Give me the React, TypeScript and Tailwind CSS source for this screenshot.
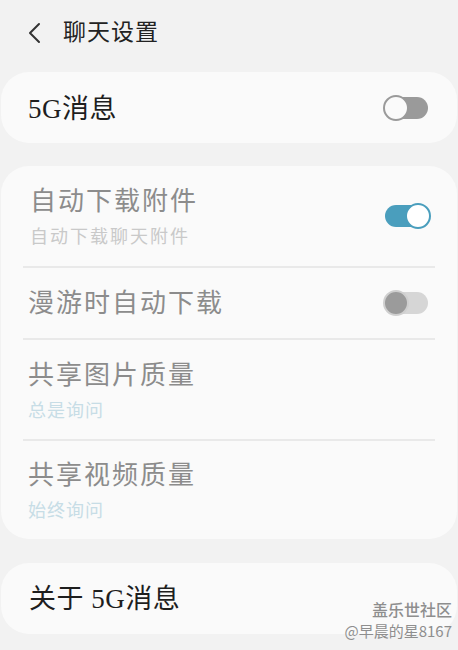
import React from "react";

const cjk = { fontFamily: '"Liberation Serif", "Noto Sans CJK SC", serif' };

function Toggle({ state }: { state: "off" | "on" | "disabled" }) {
  if (state === "on") {
    return (
      <div className="relative w-[46px] h-[26px]">
        <div className="absolute left-0 top-[2px] w-[44px] h-[22px] rounded-full bg-[#4a9ebd]" />
        <div className="absolute right-0 top-0 w-[26px] h-[26px] rounded-full bg-white border-[2px] border-[#4a9ebd]" />
      </div>
    );
  }
  if (state === "off") {
    return (
      <div className="relative w-[45px] h-[26px]">
        <div className="absolute right-0 top-[2px] w-[44px] h-[22px] rounded-full bg-[#9a9a9a]" />
        <div className="absolute left-0 top-0 w-[26px] h-[26px] rounded-full bg-[#fafafa] border-[2px] border-[#9a9a9a]" />
      </div>
    );
  }
  return (
    <div className="relative w-[45px] h-[26px]">
      <div className="absolute right-0 top-[2px] w-[44px] h-[22px] rounded-full bg-[#d6d6d6]" />
      <div className="absolute left-0 top-0 w-[26px] h-[26px] rounded-full bg-[#9b9b9b] border-[2px] border-[#cfcfcf]" />
    </div>
  );
}

function Divider() {
  return <div className="mx-[22px] h-[2px] bg-[#e9e9e9]" />;
}

export default function App() {
  return (
    <div className="relative w-[458px] h-[650px] bg-[#f2f2f2] overflow-hidden" style={cjk}>
      {/* Header */}
      <div className="flex items-center h-[72px] pl-[27px]">
        <svg width="16" height="22" viewBox="0 0 16 22" className="mr-[20px] mt-[-6px]">
          <path d="M12 2 L3 11 L12 20" fill="none" stroke="#333" strokeWidth="2" strokeLinecap="round" strokeLinejoin="round" />
        </svg>
        <span className="text-[23px] text-[#222] tracking-[1px] mt-[-5px]">聊天设置</span>
      </div>

      {/* Card 1 */}
      <div className="mx-[1px] h-[71px] rounded-[28px] bg-[#fafafa] flex items-center justify-between pl-[27px] pr-[29px]">
        <span className="text-[27px] text-[#1e1e1e] tracking-[0.5px] mt-[3px]">5G消息</span>
        <Toggle state="off" />
      </div>

      {/* Card 2 */}
      <div className="mx-[1px] mt-[23px] rounded-[28px] bg-[#fafafa] flex flex-col">
        <div className="h-[100px] flex items-center justify-between pl-[29px] pr-[26px]">
          <div className="flex flex-col mt-[2px]">
            <span className="text-[26px] leading-[34px] text-[#8c8c8c] tracking-[2px]">自动下载附件</span>
            <span className="text-[18px] leading-[24px] mt-[6px] text-[#c9c9c9] tracking-[2px]">自动下载聊天附件</span>
          </div>
          <Toggle state="on" />
        </div>
        <Divider />
        <div className="h-[70px] flex items-center justify-between pl-[27px] pr-[29px]">
          <span className="text-[26px] text-[#8c8c8c] tracking-[2px]">漫游时自动下载</span>
          <Toggle state="disabled" />
        </div>
        <Divider />
        <div className="h-[99px] flex items-center pl-[27px]">
          <div className="flex flex-col mt-[2px]">
            <span className="text-[26px] leading-[34px] text-[#8c8c8c] tracking-[2px]">共享图片质量</span>
            <span className="text-[18px] leading-[24px] mt-[6px] text-[#c7dde6] tracking-[1px]">总是询问</span>
          </div>
        </div>
        <Divider />
        <div className="h-[98px] flex items-center pl-[27px]">
          <div className="flex flex-col mt-[2px]">
            <span className="text-[26px] leading-[34px] text-[#8c8c8c] tracking-[2px]">共享视频质量</span>
            <span className="text-[18px] leading-[24px] mt-[6px] text-[#c7dde6] tracking-[1px]">始终询问</span>
          </div>
        </div>
      </div>

      {/* Card 3 */}
      <div className="mx-[1px] mt-[24px] h-[71px] rounded-[28px] bg-[#fafafa] flex items-center pl-[28px]">
        <span className="text-[27px] text-[#1e1e1e] tracking-[0.5px] mt-[2px]">关于 5G消息</span>
      </div>

      {/* Watermark */}
      <div
        className="absolute right-[6px] top-[598px] flex flex-col items-end text-[#8e8e8e]"
        style={{ fontFamily: '"Noto Sans CJK SC", "Liberation Sans", sans-serif' }}
      >
        <span className="text-[16px] leading-[22px] font-medium">盖乐世社区</span>
        <span className="text-[15px] leading-[22px]">@早晨的星8167</span>
      </div>
    </div>
  );
}
